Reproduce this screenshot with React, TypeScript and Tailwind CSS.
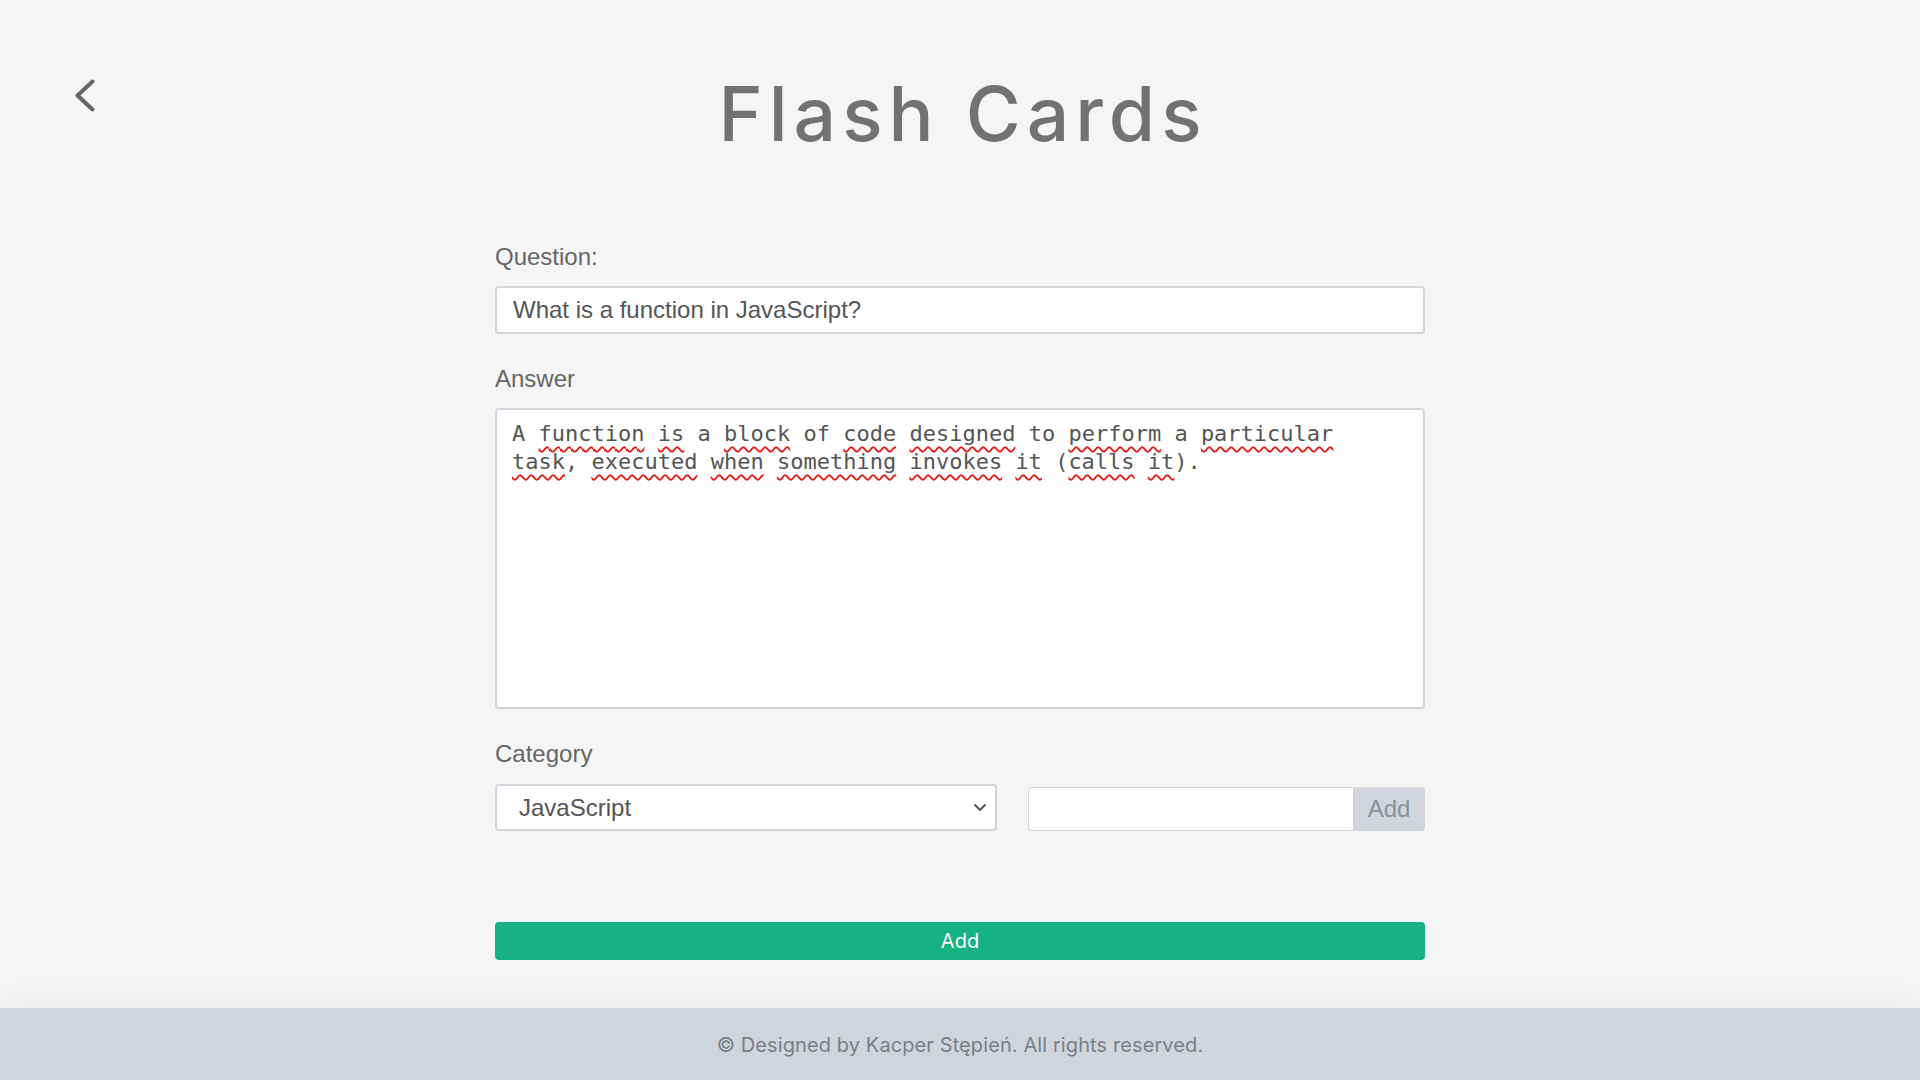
import React from 'react'

const answerWords: { text: string; wrong: boolean }[] = [
    { text: 'A', wrong: false },
    { text: 'function', wrong: true },
    { text: 'is', wrong: true },
    { text: 'a', wrong: false },
    { text: 'block', wrong: true },
    { text: 'of', wrong: false },
    { text: 'code', wrong: true },
    { text: 'designed', wrong: true },
    { text: 'to', wrong: false },
    { text: 'perform', wrong: true },
    { text: 'a', wrong: false },
    { text: 'particular', wrong: true },
]

const answerWords2: { text: string; wrong: boolean; pre?: string; post?: string }[] = [
    { text: 'task', wrong: true, post: ',' },
    { text: 'executed', wrong: true },
    { text: 'when', wrong: true },
    { text: 'something', wrong: true },
    { text: 'invokes', wrong: true },
    { text: 'it', wrong: true },
    { text: 'calls', wrong: true, pre: '(' },
    { text: 'it', wrong: true, post: ').' },
]

const Squiggle: React.FC<{ children: React.ReactNode; wrong: boolean }> = ({ children, wrong }) =>
    wrong ? (
        <span className="underline decoration-wavy decoration-[#e0201b] decoration-[1.5px] underline-offset-[5px]">
            {children}
        </span>
    ) : (
        <span>{children}</span>
    )

export default function App() {
    return (
        <div className="min-h-screen flex flex-col bg-[#f5f5f5] font-['Liberation_Sans',Arial,sans-serif]">
            {/* Header */}
            <header className="grid grid-cols-[1fr_auto_1fr]">
                <div className="pl-[74px] pt-[79px]">
                    <button className="block text-[#666]" aria-label="Back">
                        <svg width="22" height="33" viewBox="0 0 22 33" fill="none">
                            <polyline
                                points="18.5,2.5 3.5,16.5 18.5,30.5"
                                stroke="currentColor"
                                strokeWidth="4"
                                strokeLinecap="round"
                                strokeLinejoin="round"
                            />
                        </svg>
                    </button>
                </div>
                <h1 className="mt-[76px] text-[75px] leading-none tracking-[0.08em] text-[#727272] font-['Inter',sans-serif] font-[450] pl-[0.08em]">
                    Flash Cards
                </h1>
                <div />
            </header>

            {/* Form */}
            <main className="flex-1">
                <form className="w-[930px] mx-auto mt-[92px] flex flex-col" onSubmit={(e) => e.preventDefault()}>
                    <label className="text-[24px] leading-[27px] text-[#666]">Question:</label>
                    <input
                        className="mt-[16px] h-[48px] w-full rounded-[4px] border-2 border-[#d1d5db] bg-white pl-[16px] text-[24px] text-[#555] outline-none"
                        defaultValue="What is a function in JavaScript?"
                    />

                    <label className="mt-[31px] text-[24px] leading-[27px] text-[#666]">Answer</label>
                    <div
                        role="textbox"
                        className="mt-[16px] h-[301px] w-full rounded-[4px] border-2 border-[#d1d5db] bg-white pl-[15px] pr-[16px] pt-[10px] text-[22px] leading-[28px] text-[#555] font-['DejaVu_Sans_Mono',monospace]"
                    >
                        {answerWords.map((w, i) => (
                            <React.Fragment key={`a-${i}`}>
                                <Squiggle wrong={w.wrong}>{w.text}</Squiggle>{' '}
                            </React.Fragment>
                        ))}
                        <br />
                        {answerWords2.map((w, i) => (
                            <React.Fragment key={`b-${i}`}>
                                {w.pre}
                                <Squiggle wrong={w.wrong}>{w.text}</Squiggle>
                                {w.post}
                                {i < answerWords2.length - 1 ? ' ' : ''}
                            </React.Fragment>
                        ))}
                    </div>

                    <label className="mt-[31px] text-[24px] leading-[27px] text-[#666]">Category</label>
                    <div className="mt-[17px] flex items-center gap-[31px]">
                        <div className="relative w-[502px]">
                            <select
                                className="h-[47px] w-full appearance-none rounded-[4px] border-2 border-[#d1d5db] bg-white pl-[22px] text-[24px] text-[#555] outline-none"
                                defaultValue="JavaScript"
                            >
                                <option>JavaScript</option>
                                <option>HTML</option>
                                <option>CSS</option>
                            </select>
                            <svg
                                className="pointer-events-none absolute right-[10px] top-[19px] text-[#555]"
                                width="14"
                                height="9"
                                viewBox="0 0 14 9"
                                fill="none"
                            >
                                <polyline points="2,2 7,7 12,2" stroke="currentColor" strokeWidth="2" strokeLinecap="round" strokeLinejoin="round" />
                            </svg>
                        </div>
                        <div className="flex flex-1 h-[44px] mt-[3px]">
                            <input className="flex-1 min-w-0 rounded-l-[4px] border border-r-0 border-[#d1d5db] bg-white px-3 text-[20px] text-[#555] outline-none" />
                            <button type="button" className="w-[72px] rounded-r-[4px] bg-[#d1d5db] text-[24px] text-[#8a9099]">
                                Add
                            </button>
                        </div>
                    </div>

                    <button
                        type="submit"
                        className="mt-[91px] h-[38px] w-full rounded-[4px] bg-[#16b281] text-[20px] text-white font-['Inter',sans-serif]"
                    >
                        Add
                    </button>
                </form>
            </main>

            {/* Footer */}
            <footer className="mt-[48px] h-[73px] flex items-center justify-center bg-[#d0d5dc] shadow-[0_-14px_30px_rgba(0,0,0,0.035)]">
                <p className="text-[20px] tracking-[0.005em] text-[#7a7f87] font-['Inter',sans-serif]">
                    © Designed by Kacper Stępień. All rights reserved.
                </p>
            </footer>
        </div>
    )
}
